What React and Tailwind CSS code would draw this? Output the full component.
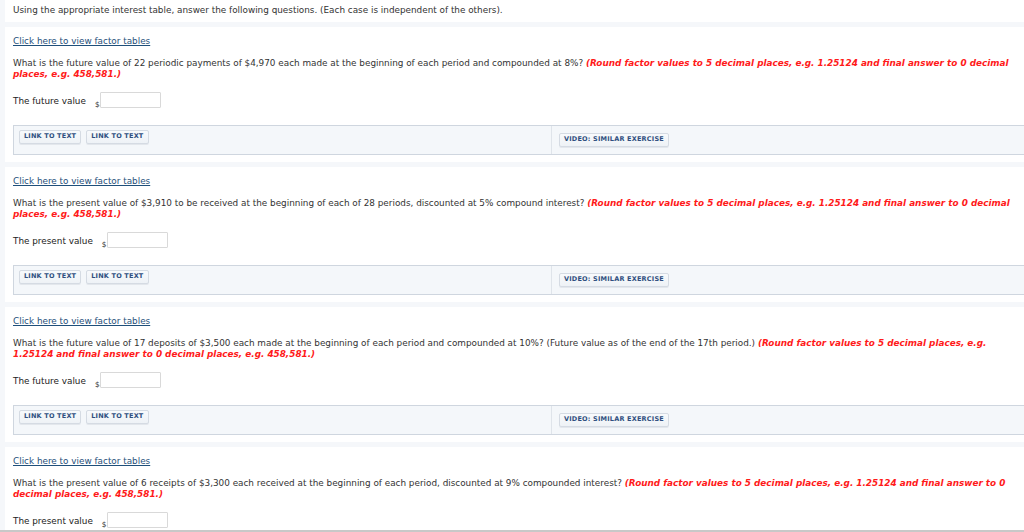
import React from "react";

const font = { fontFamily: '"DejaVu Sans", Verdana, sans-serif' };

function Btn({ children, className = "" }) {
  return (
    <span
      className={
        "inline-flex items-center h-[14px] px-[4px] rounded-[2px] border border-[#d5dbe3] bg-gradient-to-b from-[#f8fafc] to-[#eef2f6] text-[6.5px] font-bold tracking-[0.2px] text-[#2f4f7f] shadow-[0_1px_0_#e3e7ec] shrink-0 " +
        className
      }
    >
      {children}
    </span>
  );
}

function Card({ lines, label, inputOffset }) {
  return (
    <div className="bg-white ml-[5px] mt-[5px] h-[135px] pl-[8px] pt-[9px] flex flex-col">
      <a className="text-[#1f4f7a] underline text-[8.85px] leading-[10px] self-start shrink-0">
        Click here to view factor tables
      </a>
      <div className="mt-[12px] text-[8.85px] leading-[11px] text-[#333] shrink-0">
        {lines.map((l, i) => (
          <div key={i} className="whitespace-nowrap h-[11px]">
            {l[0]}
            {l[1] && (
              <span className="text-[#ff1a1a] font-bold italic">{l[1]}</span>
            )}
          </div>
        ))}
      </div>
      <div className="mt-[12px] flex items-start h-[16px] shrink-0">
        <span className="text-[8.85px] leading-[10px] text-[#222] mt-[4px]">{label}</span>
        <span className={"text-[7.5px] leading-[8px] text-[#333] mt-[9px] " + inputOffset}>$</span>
        <span className="w-[61px] h-[16px] border border-[#d9d9d9] bg-white rounded-[1px]"></span>
      </div>
      <div className="mt-[17px] h-[30px] border border-[#cfd6df] bg-[#f4f7fa] flex mr-[-4px] shrink-0">
        <div className="w-[538px] border-r border-[#dfe4ea] pl-[5px] pt-[4px] flex gap-[5px] items-start">
          <Btn>LINK TO TEXT</Btn>
          <Btn>LINK TO TEXT</Btn>
        </div>
        <div className="pl-[7px] pt-[7px] flex items-start">
          <Btn>VIDEO: SIMILAR EXERCISE</Btn>
        </div>
      </div>
    </div>
  );
}

export default function App() {
  const cards = [
    {
      lines: [
        [
          "What is the future value of 22 periodic payments of $4,970 each made at the beginning of each period and compounded at 8%? ",
          "(Round factor values to 5 decimal places, e.g. 1.25124 and final answer to 0 decimal",
        ],
        ["", "places, e.g. 458,581.)"],
      ],
      label: "The future value",
      inputOffset: "ml-[9px]",
    },
    {
      lines: [
        [
          "What is the present value of $3,910 to be received at the beginning of each of 28 periods, discounted at 5% compound interest? ",
          "(Round factor values to 5 decimal places, e.g. 1.25124 and final answer to 0 decimal",
        ],
        ["", "places, e.g. 458,581.)"],
      ],
      label: "The present value",
      inputOffset: "ml-[9px]",
    },
    {
      lines: [
        [
          "What is the future value of 17 deposits of $3,500 each made at the beginning of each period and compounded at 10%? (Future value as of the end of the 17th period.) ",
          "(Round factor values to 5 decimal places, e.g.",
        ],
        ["", "1.25124 and final answer to 0 decimal places, e.g. 458,581.)"],
      ],
      label: "The future value",
      inputOffset: "ml-[9px]",
    },
    {
      lines: [
        [
          "What is the present value of 6 receipts of $3,300 each received at the beginning of each period, discounted at 9% compounded interest? ",
          "(Round factor values to 5 decimal places, e.g. 1.25124 and final answer to 0",
        ],
        ["", "decimal places, e.g. 458,581.)"],
      ],
      label: "The present value",
      inputOffset: "ml-[9px]",
    },
  ];
  return (
    <div
      style={font}
      className="w-[1024px] h-[532px] overflow-hidden bg-[#f5f7fa] border-b-2 border-[#c8c8c8] box-border"
    >
      <div className="bg-white ml-[5px] h-[22px] pl-[8px] pt-[5px] text-[8.85px] leading-[10px] text-[#333]">
        Using the appropriate interest table, answer the following questions. (Each case is independent of the others).
      </div>
      {cards.map((c, i) => (
        <Card key={i} {...c} />
      ))}
    </div>
  );
}
